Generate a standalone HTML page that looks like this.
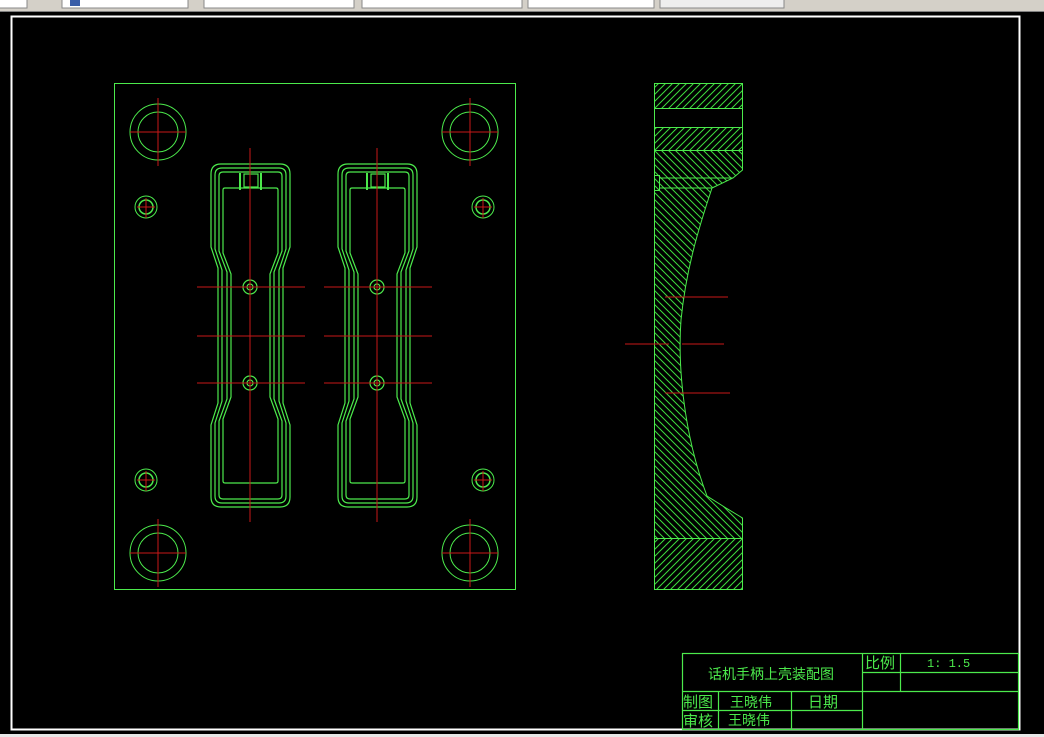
<!DOCTYPE html>
<html><head><meta charset="utf-8"><style>
html,body{margin:0;padding:0;background:#000;width:1044px;height:737px;overflow:hidden}
svg{display:block}
</style></head><body>
<svg width="1044" height="737" viewBox="0 0 1044 737" xmlns="http://www.w3.org/2000/svg" font-family="Liberation Sans, Noto Sans CJK SC, sans-serif">
<defs>
<pattern id="h1" width="7" height="7" patternUnits="userSpaceOnUse"><path d="M0 7 L7 0 M-1 1 L1 -1 M6 8 L8 6" stroke="#3ddc3d" stroke-width="1"/></pattern>
<pattern id="h2" width="7" height="7" patternUnits="userSpaceOnUse"><path d="M0 0 L7 7 M-1 6 L1 8 M6 -1 L8 1" stroke="#3ddc3d" stroke-width="1"/></pattern>
<g id="cav" fill="none" stroke="#4cea4c" stroke-width="1.2">
<path d="M211,174 Q211,164 221,164 H280 Q290,164 290,174 V247 L283,268 V403 L290,425 V497 Q290,507 280,507 H221 Q211,507 211,497 V425 L218,403 V268 L211,247 Z"/>
<path d="M215,175 Q215,168 222,168 H279 Q286,168 286,175 V249 L279,270 V401 L286,423 V496 Q286,503 279,503 H222 Q215,503 215,496 V423 L222,401 V270 L215,249 Z"/>
<path d="M219,176 Q219,172 223,172 H278 Q282,172 282,176 V251 L274,272 V399 L282,421 V495 Q282,499 278,499 H223 Q219,499 219,495 V421 L227,399 V272 L219,251 Z"/>
<path d="M223,190 Q223,188 225,188 H276 Q278,188 278,190 V253 L270,274 V397 L278,419 V481 Q278,483 276,483 H225 Q223,483 223,481 V419 L231,397 V274 L223,253 Z"/>
<rect x="244" y="174" width="14" height="13"/>
<path d="M240,173 V190 M261,173 V190" stroke-width="2"/>
<circle cx="250" cy="287" r="7"/><circle cx="250" cy="287" r="3"/>
<circle cx="250" cy="383" r="7"/><circle cx="250" cy="383" r="3"/>
</g>
<g id="cavr" stroke="#c81818" stroke-width="1">
<path d="M250,148 V522 M197,287 H305 M197,336 H305 M197,383 H305"/>
</g>
<g id="bh"><circle r="28" fill="none" stroke="#4cea4c"/><circle r="20" fill="none" stroke="#4cea4c"/><path d="M0,-34 V34 M-28,0 H28" stroke="#c81818"/></g>
<g id="sh"><circle r="11" fill="none" stroke="#4cea4c"/><circle r="7" fill="none" stroke="#4cea4c" stroke-width="1.5"/><path d="M0,-9 V11 M-9,0 H9" stroke="#c81818"/></g>
</defs>
<!-- toolbar -->
<rect x="0" y="0" width="1044" height="12" fill="#d4d0c8"/>
<rect x="0" y="11" width="1044" height="1" fill="#808080"/>
<g fill="#fff" stroke="#888"><rect x="-1" y="-2" width="28" height="10"/><rect x="62" y="-2" width="126" height="10"/><rect x="204" y="-2" width="150" height="10"/><rect x="362" y="-2" width="160" height="10"/><rect x="528" y="-2" width="126" height="10"/><rect x="660" y="-2" width="124" height="10" fill="#eee"/></g>
<rect x="70" y="0" width="10" height="6" fill="#3a5ea8"/>
<rect x="0" y="734" width="1044" height="3" fill="#e8e8e8"/>
<!-- frame -->
<rect x="11.5" y="16.5" width="1008" height="713" fill="none" stroke="#fff" stroke-width="2"/>
<!-- plate -->
<rect x="114.5" y="83.5" width="401" height="506" fill="none" stroke="#4cea4c"/>
<use href="#bh" x="158" y="132"/><use href="#bh" x="470" y="132"/><use href="#bh" x="158" y="553"/><use href="#bh" x="470" y="553"/>
<use href="#sh" x="146" y="207"/><use href="#sh" x="483" y="207"/><use href="#sh" x="146" y="480"/><use href="#sh" x="483" y="480"/>
<use href="#cav"/><use href="#cavr"/>
<use href="#cav" x="127"/><use href="#cavr" x="127"/>
<!-- side view -->
<g stroke="#4cea4c" stroke-width="1">
<rect x="654.5" y="83.5" width="88" height="25" fill="url(#h1)"/>
<rect x="654.5" y="108.5" width="88" height="19" fill="#000"/>
<rect x="654.5" y="127.5" width="88" height="23" fill="url(#h1)"/>
<path d="M654.5,150.5 H742.5 V170 L733,178 L712,188 C698,230 686,270 681,320 C678,360 682,430 707,496 L726,508 L742.5,518 V538.5 H654.5 Z" fill="url(#h2)"/>
<path d="M659,178 H733 M659,188 H712" fill="none"/>
<rect x="654.5" y="175.5" width="5" height="15" fill="none"/>
<rect x="654.5" y="538.5" width="88" height="51" fill="url(#h1)"/>
</g>
<path d="M665,297 H728 M625,344 H669 M682,344 H724 M665,393 H730" stroke="#c81818"/>
<!-- title block -->
<g stroke="#4cea4c" stroke-width="1.2" fill="none">
<rect x="682.5" y="653.5" width="336" height="76"/>
<path d="M862.5,653 V729 M900.5,653 V691 M862,672.5 H1018 M682,691.5 H1018 M682,710.5 H862 M718.5,691 V729 M791.5,691 V729"/>
</g>
<g fill="#4cea4c" font-size="14">
<text x="708" y="679">话机手柄上壳装配图</text>
<text x="865" y="668" font-size="15">比例</text>
<text x="927" y="667" font-size="12" font-family="Liberation Mono, monospace">1: 1.5</text>
<text x="683" y="707" font-size="15">制图</text>
<text x="730" y="707">王晓伟</text>
<text x="808" y="707" font-size="15">日期</text>
<text x="683" y="726" font-size="15">审核</text>
<text x="728" y="725">王晓伟</text>
</g>
</svg>
</body></html>
